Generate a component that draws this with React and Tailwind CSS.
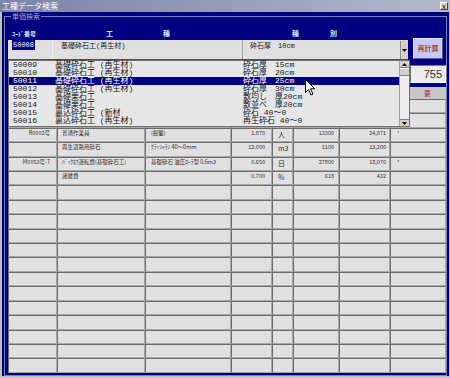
const items = [
  ['50009', '基礎砕石工 (再生材)', '砕石厚　15cm'],
  ['50010', '基礎砕石工 (再生材)', '砕石厚　20cm'],
  ['50011', '基礎砕石工 (再生材)', '砕石厚　25cm'],
  ['50012', '基礎砕石工 (再生材)', '砕石厚　30cm'],
  ['50013', '基礎栗石工', '敷均し　厚20cm'],
  ['50014', '基礎栗石工', '敷並べ　厚20cm'],
  ['50015', '裏込砕石工 (新材', '砕石 40～0'],
  ['50016', '裏込砕石工 (再生材)', '再生砕石 40～0'],
];

const rows = [
  {},
  {},
  {code: 'R0002号', name: '普通作業員', spec: '(掘鑿)', qty: '1.870', unit: '人', price: '13300', amount: '24,871', note: '*'},
  {name: '再生道路用砕石', spec: 'ｸﾗｯｼｬﾗﾝ 40～0mm', qty: '12.000', unit: 'm3', price: '1100', amount: '13,200'},
  {code: 'M0053号-7', name: 'ﾊﾞｯｸﾎｳ運転費(基礎砕石工)', spec: '基礎砕石 油圧ﾛｰﾗ型 0.6m3', qty: '0.650', unit: '日', price: '27800', amount: '18,070', note: '*'},
  {name: '諸雑費', qty: '0.700', unit: '%', price: '618', amount: '432'},
  ...Array.from({length: 13}, () => ({})),
];

const cell = 'h-full overflow-hidden whitespace-nowrap border-t border-l border-t-[#6c6c6c] border-l-[#6c6c6c] border-r border-b border-r-[#a8a8a8] border-b-[#a8a8a8] bg-[#e0e0e0] pt-[2px] leading-none';

const GridRow = ({r}) => (
  <div className="grid grid-cols-[49px_88px_86px_41px_21px_46px_51px_56px] h-[14.42px] text-[5.5px] text-[#303030]">
    <div className={`${cell} text-right pr-[6px]`}>{r.code}</div>
    <div className={`${cell} pl-[4px]`}>{r.name}</div>
    <div className={`${cell} pl-[5px]`}>{r.spec}</div>
    <div className={`${cell} text-right pr-[6px]`}>{r.qty}</div>
    <div className={`${cell} pl-[5px] text-[7px] pt-[1px]`}>{r.unit}</div>
    <div className={`${cell} text-right pr-[4px]`}>{r.price}</div>
    <div className={`${cell} text-right pr-[3px]`}>{r.amount}</div>
    <div className={`${cell} pl-[6px]`}>{r.note}</div>
  </div>
);

const Arrow = ({up}) => (
  <svg width="5" height="3" viewBox="0 0 5 3">
    <path d={up ? 'M2.5 0 L5 3 L0 3 Z' : 'M0 0 L5 0 L2.5 3 Z'} fill="#000" />
  </svg>
);

export default function App() {
  return (
    <div className="relative w-[450px] h-[378px] overflow-hidden flex flex-col bg-[#000080] font-['Noto_Sans_CJK_JP',sans-serif]">
      {/* title bar */}
      <div className="h-[12px] shrink-0 flex items-center justify-between bg-gradient-to-r from-[#7c84a8] via-[#959db9] to-[#b4bace] pl-[2px] pr-[2px]">
        <span className="text-[8px] leading-none text-white">工種データ検索</span>
        <span className="w-[8px] h-[8px] flex items-center justify-center bg-[#d4d0c8] border-t border-l border-white border-r border-b border-r-[#404040] border-b-[#404040] text-[7px] leading-none text-black">x</span>
      </div>

      <div className="flex-1 flex flex-col border-l-2 border-r border-b-2 border-[#c0c0c0] pl-[2px] pr-[2px] pt-[1px]">
        <fieldset className="flex-1 flex flex-col border border-[#7880b4] pl-[3px] min-w-0">
          <legend className="ml-[3px] px-[1px] text-[7px] leading-[7px] text-[#a4a8cc]">単価検索</legend>

          {/* column labels */}
          <div className="h-[19px] flex items-end pb-[2px] text-[7px] leading-[7px] font-bold text-[#c8ecff]">
            <span className="w-[98px] pl-[4px] text-[6px]">ｺｰﾄﾞ番号</span>
            <span className="w-[57px]">工</span>
            <span className="w-[129px]">種</span>
            <span className="w-[38px]">種</span>
            <span>別</span>
          </div>

          {/* combo row */}
          <div className="relative h-[21px] flex">
            <div className="w-[400px] h-[20px] mt-[1px] flex bg-[#e0e0e0] border-b border-[#505050] text-[7px] leading-none text-[#202020] font-['Liberation_Mono','Noto_Sans_CJK_JP',monospace]">
              <div className="w-[45px] border-r border-[#f0f0f0] pl-[4px] pt-[2px]">
                <span className="bg-[#000080] text-white px-[1px] py-[1px]">50008</span>
              </div>
              <div className="w-[190px] border-r border-[#a0a0a0] pl-[8px] pt-[3px]">基礎砕石工(再生材)</div>
              <div className="flex-1 pl-[7px] pt-[3px] whitespace-pre">砕石厚　10cm</div>
              <div className="w-[8px] h-[18px] mt-[1px] flex items-center justify-center bg-[#d4d0c8] border-l border-[#909090]">
                <Arrow />
              </div>
            </div>
            <div className="ml-[5px] w-[30px] h-[21px] -mt-[1px] flex items-center justify-center bg-[#c8c8f8] border-t border-l border-[#ececff] border-r border-b border-r-[#606090] border-b-[#606090] text-[7px] font-bold leading-none text-[#a05030]">
              再計算
            </div>

            {/* open dropdown list */}
            <div className="absolute left-0 top-full z-10 w-[402px] h-[67px] flex bg-[#e6e6e6] border border-[#707070] text-[8px] leading-[8px] text-[#202020] font-['Liberation_Mono','Noto_Sans_CJK_JP',monospace]">
              <div className="flex-1 flex flex-col">
                {items.map(([code, name, spec]) => (
                  <div
                    key={code}
                    className={`h-[8px] flex whitespace-pre ${code === '50011' ? 'bg-[#000080] text-white' : ''}`}
                  >
                    <span className="w-[46px] pl-[4px]">{code}</span>
                    <span className="w-[188px]">{name}</span>
                    <span>{spec}</span>
                  </div>
                ))}
              </div>
              <div className="w-[10px] flex flex-col bg-[#ececec] border-l border-[#a0a0a0]">
                <div className="h-[7px] flex items-center justify-center bg-[#d4d0c8] border-b border-[#808080]"><Arrow up /></div>
                <div className="h-[8px] bg-[#d4d0c8] border-b border-[#808080] border-t border-t-white"></div>
                <div className="flex-1"></div>
                <div className="h-[7px] flex items-center justify-center bg-[#d4d0c8] border-t border-[#808080]"><Arrow /></div>
              </div>
            </div>
          </div>

          {/* total row */}
          <div className="h-[27px] flex justify-end items-start pt-[5px]">
            <div className="w-[36px] h-[18px] flex items-center justify-end pr-[3px] bg-[#ececec] border-t border-l border-[#707070] border-r border-b border-r-white border-b-white text-[11px] leading-none text-[#303030] font-['Liberation_Sans',sans-serif]">
              755
            </div>
          </div>

          {/* table header */}
          <div className="grid grid-cols-[49px_88px_86px_41px_21px_46px_51px_56px] h-[12px] text-[7px] leading-none text-[#a03c3c] bg-[#c8c8c8]">
            <div className="flex items-center justify-center">コード</div>
            <div className="flex items-center justify-center">名　称</div>
            <div className="flex items-center justify-center">規　格</div>
            <div className="flex items-center justify-center">数量</div>
            <div className="flex items-center justify-center">単位</div>
            <div className="flex items-center justify-center">単価</div>
            <div className="flex items-center justify-center">金額</div>
            <div className="flex items-center justify-between pl-[5px] pr-[15px]"><span>摘</span><span>要</span></div>
          </div>

          {/* table rows */}
          <div className="flex flex-col">
            {rows.map((r, i) => (
              <GridRow key={i} r={r} />
            ))}
          </div>
        </fieldset>
      </div>

      {/* mouse pointer */}
      <svg className="absolute left-[305px] top-[79px] z-20" width="11" height="17" viewBox="0 0 11 17">
        <path d="M0.5 0.5 L0.5 13.5 L3.5 10.5 L6 16 L8 15 L5.5 9.8 L9.8 9.8 Z" fill="#fff" stroke="#000" strokeWidth="1" strokeLinejoin="miter" />
      </svg>
    </div>
  );
}
